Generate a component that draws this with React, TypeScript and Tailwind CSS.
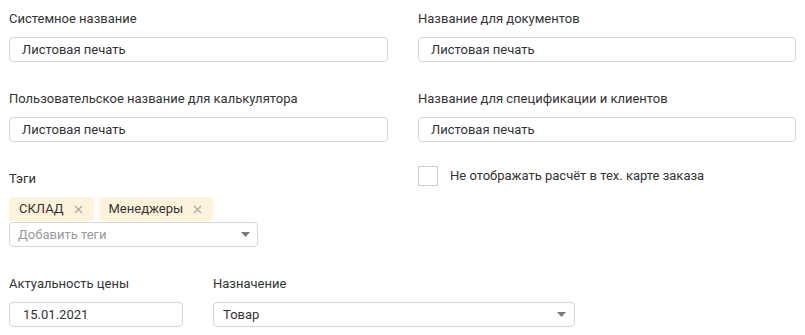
import React from "react";

const font = { fontFamily: "Roboto, 'Noto Sans', sans-serif" };

function Label({ children }: { children: React.ReactNode }) {
  return <div className="h-[18px] text-[13px] leading-[18px] text-[#333333]">{children}</div>;
}

function TextInput({ value, className = "" }: { value: string; className?: string }) {
  return (
    <div
      className={`mt-[9px] flex h-[25px] items-center rounded-[4px] border border-[#d3d6db] bg-white pl-[12px] text-[13px] text-[#333333] ${className}`}
    >
      {value}
    </div>
  );
}

function Caret() {
  return (
    <svg width="9" height="5" viewBox="0 0 9 5" className="shrink-0">
      <path d="M0 0 H9 L4.5 5 Z" fill="#7a7a7a" />
    </svg>
  );
}

function Cross() {
  return (
    <svg width="9" height="9" viewBox="0 0 9 9" className="shrink-0">
      <path d="M1 1 L8 8 M8 1 L1 8" stroke="#a9a9a9" strokeWidth="1.2" />
    </svg>
  );
}

function Chip({ text }: { text: string }) {
  return (
    <div className="flex h-[24px] items-center gap-[10px] rounded-[4px] bg-[#fcf3da] pl-[10px] pr-[11px] text-[13px] text-[#333333]">
      <span>{text}</span>
      <Cross />
    </div>
  );
}

export default function App() {
  return (
    <div className="h-[335px] w-[805px] bg-white px-[9px] pt-[10px]" style={font}>
      <div className="grid grid-cols-[379px_378px] gap-x-[30px]">
        <div>
          <Label>Системное название</Label>
          <TextInput value="Листовая печать" />
        </div>
        <div>
          <Label>Название для документов</Label>
          <TextInput value="Листовая печать" />
        </div>
        <div className="mt-[28px]">
          <Label>Пользовательское название для калькулятора</Label>
          <TextInput value="Листовая печать" />
        </div>
        <div className="mt-[28px]">
          <Label>Название для спецификации и клиентов</Label>
          <TextInput value="Листовая печать" />
        </div>
        <div className="mt-[28px]">
          <Label>Тэги</Label>
          <div className="mt-[9px] flex gap-[5px]">
            <Chip text="СКЛАД" />
            <Chip text="Менеджеры" />
          </div>
          <div className="mt-px flex h-[25px] w-[249px] items-center justify-between rounded-[4px] border border-[#d3d6db] bg-white pl-[8px] pr-[7px] text-[13px] text-[#9a9a9a]">
            <span>Добавить теги</span>
            <Caret />
          </div>
        </div>
        <div className="mt-[24px]">
          <div className="flex items-center gap-[12px]">
            <div className="h-[20px] w-[20px] border border-[#d0d0d0] bg-white" />
            <span className="text-[13px] text-[#333333]">Не отображать расчёт в тех. карте заказа</span>
          </div>
        </div>
      </div>
      <div className="mt-[28px] flex gap-[30px]">
        <div className="w-[174px]">
          <Label>Актуальность цены</Label>
          <TextInput value="15.01.2021" className="pl-[13px]" />
        </div>
        <div className="w-[362px]">
          <Label>Назначение</Label>
          <div className="mt-[9px] flex h-[25px] items-center justify-between rounded-[4px] border border-[#d3d6db] bg-white pl-[9px] pr-[8px] text-[13px] text-[#333333]">
            <span>Товар</span>
            <Caret />
          </div>
        </div>
      </div>
    </div>
  );
}
